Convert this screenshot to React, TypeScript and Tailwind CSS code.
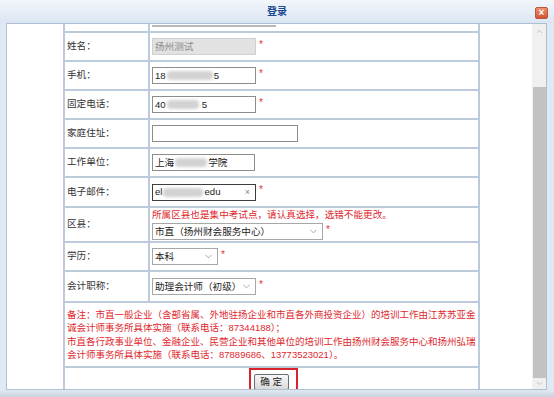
import { ChevronDown, ChevronUp } from "lucide-react"

// 模糊处理的个人信息
const Blur = ({ w }: { w: number }) => (
  <span
    className="mx-[1px] inline-block h-[9px] rounded-sm bg-[#d2d2d2] blur-[1.5px]"
    style={{ width: w }}
  />
)

const Star = () => (
  <span className="ml-[3px] -mt-[4px] text-[10px] leading-none text-[#e3323c]">*</span>
)

interface BoxProps {
  width: string
  children?: React.ReactNode
  className?: string
}

const Box = ({ width, children, className = "bg-white text-[#222]" }: BoxProps) => (
  <div
    className={`flex h-[17px] items-center border px-[2px] text-[9.6px] leading-none ${width} ${className}`}
  >
    {children}
  </div>
)

const Select = ({ width, text }: { width: string; text: string }) => (
  <Box width={width} className="justify-between border-[#a7a7a7] bg-white text-[#222]">
    <span>{text}</span>
    <ChevronDown size={11} strokeWidth={1.3} className="mr-[1px] text-[#707070]" />
  </Box>
)

const Label = ({ text }: { text: string }) => (
  <td className="border-2 border-[#bccbdc] pl-[2px] align-middle text-[9.6px] text-[#333]">
    {text}
  </td>
)

const Row = ({ h, label, children }: { h: string; label: string; children: React.ReactNode }) => (
  <tr className={h}>
    <Label text={label} />
    <td className="border-2 border-[#bccbdc] pl-[2px] align-middle">
      <div className="flex items-center">{children}</div>
    </td>
  </tr>
)

export default function App() {
  return (
    <div className="flex h-[397px] w-[554px] flex-col overflow-hidden bg-[#dfe8f3] font-['Liberation_Sans','Noto_Sans_CJK_SC',sans-serif]">
      {/* 标题栏 */}
      <div className="relative flex h-[23px] shrink-0 items-center justify-center bg-gradient-to-b from-[#f2f6fb] to-[#dbe6f2]">
        <span className="text-[10px] font-bold text-[#1c4a8f]">登录</span>
        <div className="absolute right-[6px] top-[7px] flex h-[12px] w-[13px] items-center justify-center rounded-[2px] border border-[#b9553a] bg-gradient-to-b from-[#f0926f] to-[#d0532f] text-[10px] font-bold leading-none text-white">
          ×
        </div>
      </div>

      <div className="ml-[6px] mr-[7px] flex h-[367px] shrink-0 border border-[#aebfd3] bg-white">
        {/* 内容区 */}
        <div className="flex-1 overflow-hidden pl-[56px]">
          <table className="-mt-[22px] w-[415px] border-collapse">
            <tbody>
              <tr className="h-[29px]">
                <td className="w-[85px] border-2 border-[#bccbdc]" />
                <td className="border-2 border-[#bccbdc] pl-[2px] align-bottom">
                  <div className="mb-[4px] h-[2px] w-[124px] bg-[#b7b7b7]" />
                </td>
              </tr>
              <Row h="h-[29px]" label="姓名：">
                <Box width="w-[104px]" className="border-[#d0d0d0] bg-[#e2e2e2] text-[#8a8a8a]">
                  扬州测试
                </Box>
                <Star />
              </Row>
              <Row h="h-[29px]" label="手机：">
                <Box width="w-[104px]" className="border-[#8d8d8d] bg-white text-[#222]">
                  18
                  <Blur w={46} />
                  5
                </Box>
                <Star />
              </Row>
              <Row h="h-[29px]" label="固定电话：">
                <Box width="w-[104px]" className="border-[#8d8d8d] bg-white text-[#222]">
                  40
                  <Blur w={32} />
                  <span className="ml-[2px]">5</span>
                </Box>
                <Star />
              </Row>
              <Row h="h-[29px]" label="家庭住址：">
                <Box width="w-[146px]" className="border-[#8d8d8d] bg-white" />
              </Row>
              <Row h="h-[29px]" label="工作单位：">
                <Box width="w-[103px]" className="border-[#8d8d8d] bg-white text-[#222]">
                  上海
                  <Blur w={32} />
                  学院
                </Box>
              </Row>
              <Row h="h-[30px]" label="电子邮件：">
                <Box width="w-[104px]" className="justify-between border-[#3d3d3d] bg-white text-[#222]">
                  <span className="flex items-center">
                    el
                    <Blur w={40} />
                    edu
                  </span>
                  <span className="mr-[3px] text-[9px] text-[#888]">×</span>
                </Box>
                <Star />
              </Row>
              <tr className="h-[35px]">
                <Label text="区县：" />
                <td className="border-2 border-[#bccbdc] pl-[2px] align-middle">
                  <div className="text-[9.6px] leading-[12px] text-[#e0282e]">
                    所属区县也是集中考试点，请认真选择，选错不能更改。
                  </div>
                  <div className="mt-[2px] flex items-center">
                    <Select width="w-[171px]" text="市直（扬州财会服务中心）" />
                    <Star />
                  </div>
                </td>
              </tr>
              <Row h="h-[29px]" label="学历：">
                <Select width="w-[66px]" text="本科" />
                <Star />
              </Row>
              <Row h="h-[31px]" label="会计职称：">
                <Select width="w-[104px]" text="助理会计师（初级）" />
                <Star />
              </Row>
              <tr className="h-[65px]">
                <td
                  colSpan={2}
                  className="border-2 border-[#bccbdc] px-[2px] align-middle text-[9.5px] leading-[13.5px] text-[#e0282e]"
                >
                  <div className="whitespace-nowrap">
                    备注：市直一般企业（含部省属、外地驻扬企业和市直各外商投资企业）的培训工作由江苏苏亚金
                  </div>
                  <div className="whitespace-nowrap">诚会计师事务所具体实施（联系电话：87344188）；</div>
                  <div className="whitespace-nowrap">
                    市直各行政事业单位、金融企业、民营企业和其他单位的培训工作由扬州财会服务中心和扬州弘瑞
                  </div>
                  <div className="whitespace-nowrap">
                    会计师事务所具体实施（联系电话：87889686、13773523021）。
                  </div>
                </td>
              </tr>
              <tr className="h-[21px]">
                <td colSpan={2} className="border-2 border-[#bccbdc] text-center align-middle">
                  <span className="relative inline-block">
                    <button className="flex h-[16px] w-[35px] items-center justify-center rounded-[2px] border border-[#6f6f6f] bg-gradient-to-b from-[#f7f7f7] to-[#dadada] text-[9.6px] leading-none text-[#222]">
                      确 定
                    </button>
                    <span className="absolute -bottom-[6px] -left-[5px] -right-[9px] -top-[6px] border-2 border-[#d8232b]" />
                  </span>
                </td>
              </tr>
            </tbody>
          </table>
        </div>

        {/* 滚动条 */}
        <div className="flex w-[14px] shrink-0 flex-col bg-[#f0f0f0]">
          <div className="flex h-[14px] items-center justify-center">
            <ChevronUp size={9} strokeWidth={1.5} className="text-[#a0a0a0]" />
          </div>
          <div className="mt-[49px] h-[291px] w-[13px] self-center bg-[#c2c2c2]" />
          <div className="flex flex-1 items-center justify-center">
            <ChevronDown size={9} strokeWidth={1.5} className="text-[#a0a0a0]" />
          </div>
        </div>
      </div>

      <div className="flex-1 bg-gradient-to-b from-[#dfe8f3] to-[#c9d3de]" />
    </div>
  )
}
